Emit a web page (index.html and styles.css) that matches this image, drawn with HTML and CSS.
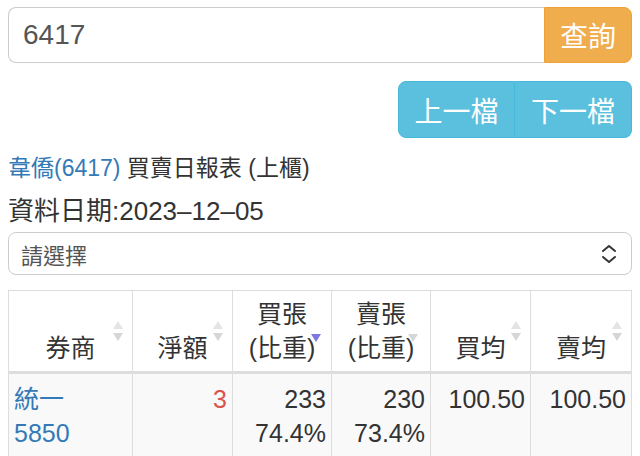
FILE: index.html
```html
<!DOCTYPE html>
<html lang="zh-Hant">
<head>
    <meta charset="UTF-8">
    <meta name="viewport" content="width=device-width, initial-scale=1.0">
    <title>買賣日報表</title>
    <link rel="stylesheet" href="styles.css">
</head>
<body>
    <div class="page">
        <div class="search-row">
            <input type="text" class="search-input" value="6417">
            <button class="btn btn-query">查詢</button>
        </div>

        <div class="nav-row">
            <div class="btn-group">
                <button class="btn btn-info">上一檔</button>
                <button class="btn btn-info">下一檔</button>
            </div>
        </div>

        <div class="report-title"><a href="#" class="stock-link">韋僑(6417)</a> 買賣日報表 (上櫃)</div>
        <div class="report-date">資料日期:2023–12–05</div>

        <div class="select-box">
            <span>請選擇</span>
            <svg class="select-arrow" width="16" height="20" viewBox="0 0 16 20">
                <polyline points="2,7 8,2 14,7" fill="none" stroke="#333" stroke-width="2" stroke-linecap="round" stroke-linejoin="round"/>
                <polyline points="2,13 8,18 14,13" fill="none" stroke="#333" stroke-width="2" stroke-linecap="round" stroke-linejoin="round"/>
            </svg>
        </div>

        <table class="report-table">
            <colgroup>
                <col style="width: 124px">
                <col style="width: 100px">
                <col style="width: 99px">
                <col style="width: 99px">
                <col style="width: 100px">
                <col style="width: 101px">
            </colgroup>
            <thead>
                <tr>
                    <th class="sorting">券商</th>
                    <th class="sorting">淨額</th>
                    <th class="sorting-desc">買張<br>(比重)</th>
                    <th class="sorting-down">賣張<br>(比重)</th>
                    <th class="sorting">買均</th>
                    <th class="sorting">賣均</th>
                </tr>
            </thead>
            <tbody>
                <tr>
                    <td><a href="#" class="stock-link">統一<br>5850</a></td>
                    <td class="num up">3</td>
                    <td class="num">233<br>74.4%</td>
                    <td class="num">230<br>73.4%</td>
                    <td class="num">100.50</td>
                    <td class="num">100.50</td>
                </tr>
            </tbody>
        </table>
    </div>
</body>
</html>
```

FILE: styles.css
```css
body {
    margin: 0;
    font-family: "Liberation Sans", "Noto Sans CJK TC", sans-serif;
    color: #333;
    background: #fff;
}
.page {
    padding: 7px 8px 0 8px;
}
.search-row {
    display: flex;
    height: 56px;
}
.search-input {
    flex: 1;
    min-width: 0;
    box-sizing: border-box;
    height: 56px;
    padding: 0 14px;
    border: 1px solid #ccc;
    border-right: none;
    border-radius: 8px 0 0 8px;
    font-family: inherit;
    font-size: 28px;
    color: #555;
    outline: none;
}
.btn {
    font-family: inherit;
    font-size: 28px;
    color: #fff;
    cursor: pointer;
    margin: 0;
}
.btn-query {
    width: 88px;
    background-color: #f0ad4e;
    border: 1px solid #eea236;
    border-radius: 0 8px 8px 0;
}
.nav-row {
    display: flex;
    justify-content: flex-end;
    margin-top: 18px;
}
.btn-group {
    display: flex;
    height: 57px;
}
.btn-info {
    width: 117px;
    background-color: #5bc0de;
    border: 1px solid #46b8da;
}
.btn-info:first-child {
    border-radius: 8px 0 0 8px;
}
.btn-info:last-child {
    border-left: none;
    border-radius: 0 8px 8px 0;
}
.report-title {
    margin-top: 13px;
    font-size: 23px;
    line-height: 34px;
}
.stock-link {
    color: #337ab7;
    text-decoration: none;
}
.report-date {
    margin-top: 8px;
    font-size: 26px;
    line-height: 36px;
}
.select-box {
    display: flex;
    align-items: center;
    justify-content: space-between;
    box-sizing: border-box;
    height: 43px;
    margin-top: 3px;
    padding: 0 12px;
    border: 1px solid #ccc;
    border-radius: 8px;
    font-size: 22px;
    color: #555;
}
.select-arrow {
    margin-right: 2px;
}
.report-table {
    width: 623px;
    margin-top: 15px;
    border-collapse: collapse;
    table-layout: fixed;
    font-size: 25px;
    line-height: 34px;
}
.report-table th,
.report-table td {
    border: 1px solid #ddd;
    padding: 6px 5px;
}
.report-table th {
    position: relative;
    text-align: center;
    vertical-align: bottom;
    font-weight: normal;
    border-bottom: 3px solid #ddd;
}
.report-table td {
    vertical-align: top;
    padding-top: 8px;
}
.report-table tbody tr {
    background-color: #f9f9f9;
}
.num {
    text-align: right;
}
.up {
    color: #d9534f;
}
/* sort markers */
.sorting::before,
.sorting::after,
.sorting-desc::after,
.sorting-down::after {
    content: "";
    position: absolute;
    right: 9px;
    width: 0;
    height: 0;
    border-left: 5px solid transparent;
    border-right: 5px solid transparent;
}
.sorting::before {
    top: 30px;
    border-bottom: 8px solid #e4e4e4;
}
.sorting::after {
    top: 42px;
    border-top: 8px solid #d6d6d6;
}
.sorting-desc::after {
    top: 43px;
    right: 10px;
    border-top: 8px solid #7f77e0;
}
.sorting-down::after {
    top: 43px;
    right: 12px;
    border-top: 8px solid #d6d6d6;
}
```
